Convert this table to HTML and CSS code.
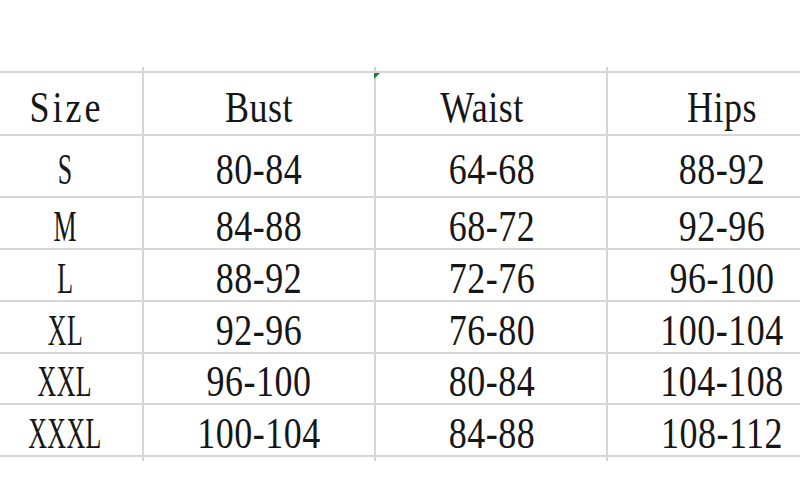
FILE: index.html
```html
<!DOCTYPE html>
<html>
<head>
<meta charset="utf-8">
<link rel="stylesheet" href="styles.css">
</head>
<body>
<div class="sheet">
  <div class="grid">
    <div class="cell c1 tall"><span class="t size">Size</span></div>
    <div class="cell c2 tall first"><span class="t">Bust</span></div>
    <div class="cell c3 tall first"><span class="flag"></span><span class="t waist">Waist</span></div>
    <div class="cell c4 tall first"><span class="t">Hips</span></div>

    <div class="cell c1 tall"><span class="t n">S</span></div>
    <div class="cell c2 tall"><span class="t">80-84</span></div>
    <div class="cell c3 tall"><span class="t">64-68</span></div>
    <div class="cell c4 tall"><span class="t">88-92</span></div>

    <div class="cell c1"><span class="t n">M</span></div>
    <div class="cell c2"><span class="t">84-88</span></div>
    <div class="cell c3"><span class="t">68-72</span></div>
    <div class="cell c4"><span class="t">92-96</span></div>

    <div class="cell c1"><span class="t n">L</span></div>
    <div class="cell c2"><span class="t">88-92</span></div>
    <div class="cell c3"><span class="t">72-76</span></div>
    <div class="cell c4"><span class="t">96-100</span></div>

    <div class="cell c1"><span class="t n">XL</span></div>
    <div class="cell c2"><span class="t">92-96</span></div>
    <div class="cell c3"><span class="t">76-80</span></div>
    <div class="cell c4"><span class="t">100-104</span></div>

    <div class="cell c1"><span class="t n">XXL</span></div>
    <div class="cell c2"><span class="t">96-100</span></div>
    <div class="cell c3"><span class="t">80-84</span></div>
    <div class="cell c4"><span class="t">104-108</span></div>

    <div class="cell c1 last"><span class="t n">XXXL</span></div>
    <div class="cell c2 last"><span class="t">100-104</span></div>
    <div class="cell c3 last"><span class="t">84-88</span></div>
    <div class="cell c4 last"><span class="t">108-112</span></div>
  </div>
</div>
</body>
</html>
```

FILE: styles.css
```css
html, body {
  margin: 0;
  padding: 0;
  background: #ffffff;
}

.sheet {
  width: 800px;
  height: 500px;
  overflow: hidden;
  padding-top: 71px;
  box-sizing: border-box;
}

.grid {
  display: grid;
  grid-template-columns: 142px 232px 232px 1fr;
  grid-template-rows: 63px 62px 52px 52px 52px 51px 52px;
  border-top: 2px solid #d6d6d6;
}

.cell {
  position: relative;
  display: flex;
  justify-content: center;
  align-items: flex-end;
  border-bottom: 2px solid #d6d6d6;
  font-family: "Liberation Serif", "Times New Roman", serif;
  font-size: 36px;
  line-height: 1;
  color: #161616;
  letter-spacing: 0.5px;
}

.c2, .c3, .c4 {
  border-left: 2px solid #d6d6d6;
}

.c1 {
  padding-right: 12px;
}

.c3 {
  padding-left: 2px;
}

.c4 {
  padding-left: 36px;
}

.tall {
  padding-bottom: 5px;
}

.t {
  display: inline-block;
  transform: scaleY(1.25);
  transform-origin: 50% 100%;
  white-space: nowrap;
}

.t.n {
  transform: scale(0.72, 1.25);
}

.t.size {
  letter-spacing: 3px;
  margin-right: -3px;
}

.waist {
  margin-right: 20px;
}

.first::before,
.c2.last::after,
.c3.last::after,
.c4.last::after {
  content: "";
  position: absolute;
  left: -2px;
  width: 2px;
  height: 4px;
  background: #d6d6d6;
}

.first::before {
  top: -6px;
}

.c2.last::after,
.c3.last::after,
.c4.last::after {
  bottom: -6px;
}

.c1.last::after {
  content: "";
  position: absolute;
  right: 0;
  bottom: -6px;
  width: 2px;
  height: 4px;
  background: transparent;
}

.flag {
  position: absolute;
  left: -2px;
  top: 0;
  width: 0;
  height: 0;
  border-top: 6px solid #1f7a37;
  border-right: 6px solid transparent;
}
```
